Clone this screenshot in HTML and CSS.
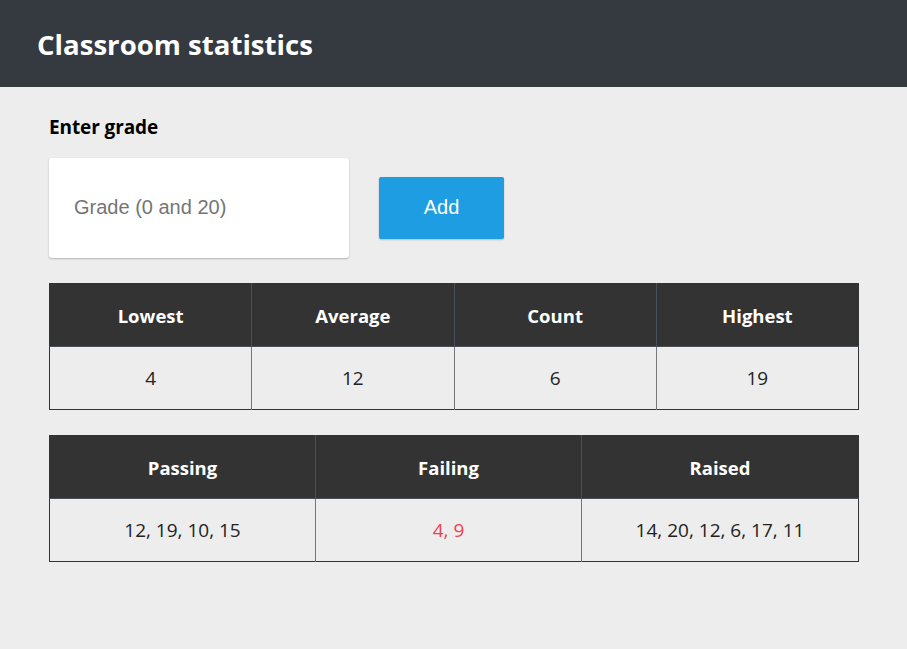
FILE: index.html
```html
<!DOCTYPE html>
<html lang="en">
<head>
<meta charset="utf-8">
<title>Classroom statistics</title>
<link rel="stylesheet" href="styles.css">
</head>
<body>
<header class="topbar">
  <h1 class="title">Classroom statistics</h1>
</header>
<main class="content">
  <label class="field-label" for="grade">Enter grade</label>
  <div class="form-row">
    <input id="grade" class="grade-input" type="text" placeholder="Grade (0 and 20)">
    <button class="add-btn" type="button">Add</button>
  </div>
  <table class="stats stats-four">
    <thead>
      <tr><th>Lowest</th><th>Average</th><th>Count</th><th>Highest</th></tr>
    </thead>
    <tbody>
      <tr><td>4</td><td>12</td><td>6</td><td>19</td></tr>
    </tbody>
  </table>
  <table class="stats stats-three">
    <thead>
      <tr><th>Passing</th><th>Failing</th><th>Raised</th></tr>
    </thead>
    <tbody>
      <tr><td>12, 19, 10, 15</td><td class="failing">4, 9</td><td>14, 20, 12, 6, 17, 11</td></tr>
    </tbody>
  </table>
</main>
</body>
</html>
```
FILE: styles.css
```css
html, body {
  margin: 0;
  padding: 0;
}
body {
  background: #ededed;
  font-family: "Open Sans", "Noto Sans", sans-serif;
  color: #222;
}
.topbar {
  background: #343a40;
  height: 87px;
  display: flex;
  align-items: center;
  padding: 0 37px;
  box-sizing: border-box;
}
.title {
  margin: 0;
  color: #fff;
  font-size: 27.6px;
  font-weight: 700;
}
.content {
  padding: 28px 49px 0;
  display: flex;
  flex-direction: column;
  align-items: flex-start;
}
.field-label {
  font-size: 19px;
  font-weight: 700;
  color: #000;
  line-height: 24px;
  letter-spacing: -0.1px;
}
.form-row {
  margin-top: 19px;
  display: flex;
  align-items: center;
  gap: 30px;
}
.grade-input {
  width: 300px;
  height: 100px;
  box-sizing: border-box;
  border: none;
  border-radius: 3px;
  background: #fff;
  box-shadow: 0 1px 2px rgba(0,0,0,0.25);
  padding: 0 25px 2px;
  font-family: "Liberation Sans", Arial, sans-serif;
  font-size: 20px;
  color: #333;
  outline: none;
}
.grade-input::placeholder {
  color: #757575;
}
.add-btn {
  width: 125px;
  height: 62px;
  border: none;
  border-radius: 2px;
  background: #1e9de2;
  color: #fff;
  font-family: "Liberation Sans", Arial, sans-serif;
  font-size: 20px;
  padding-bottom: 2px;
  box-shadow: 0 1px 2px rgba(0,0,0,0.2);
}
.stats {
  width: 810px;
  margin-top: 25px;
  border-collapse: collapse;
  border: 1px solid #333;
  table-layout: fixed;
}
.stats th {
  background: #333;
  color: #fff;
  font-size: 18.5px;
  font-weight: 700;
  height: 62px;
  padding: 0;
  border-left: 1px solid #4a5058;
}
.stats th:first-child, .stats td:first-child {
  border-left: none;
}
.stats td {
  height: 62px;
  padding: 0;
  text-align: center;
  font-size: 19px;
  color: #222;
  border-left: 1px solid #777;
  border-top: 1px solid #4a5058;
}
.stats-three th:nth-child(1), .stats-three th:nth-child(2) {
  width: 265px;
}
.stats td.failing {
  color: #ee4150;
}
```
